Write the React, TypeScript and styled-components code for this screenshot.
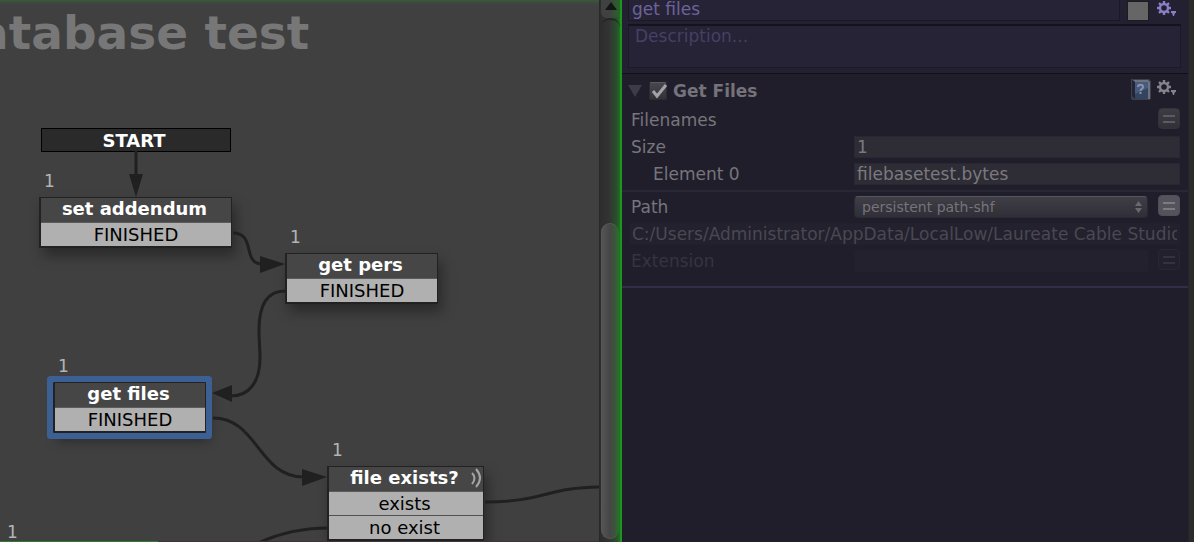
import React from 'react';
import styled, { createGlobalStyle } from 'styled-components';

const GlobalStyle = createGlobalStyle`
  * { box-sizing: border-box; }
  body { margin: 0; background: #201e2a; font-family: "DejaVu Sans", Verdana, sans-serif; overflow: hidden; }
  button, input, textarea, select { font-family: inherit; }
`;

const Editor = styled.div`
  display: grid;
  grid-template-columns: minmax(0, 599fr) 23px minmax(0, 566fr) 6px;
  height: 100vh;
`;

/* ---------- graph canvas ---------- */

const Canvas = styled.main`
  position: relative;
  overflow: hidden;
  background: linear-gradient(#3b5a3b 0, #3f463f 3px, #404040 6px, #404040 100%);
`;

const Title = styled.h1`
  position: absolute;
  left: -62px;
  top: 5px;
  margin: 0;
  font-size: 47px;
  line-height: 56px;
  white-space: nowrap;
  color: #777;
`;

const Wires = styled.svg`
  position: absolute;
  left: 0;
  top: 0;
  overflow: visible;
`;

const BottomRule = styled.div`
  position: absolute;
  left: 0;
  right: 0;
  bottom: 0;
  height: 1px;
  background: linear-gradient(90deg, #2f7a2f 158px, #40333d 158px);
`;

const Placed = styled.div<{ $x: number; $y: number; $w?: number }>`
  position: absolute;
  left: ${p => p.$x}px;
  top: ${p => p.$y}px;
  width: ${p => (p.$w ? `${p.$w}px` : 'auto')};
`;

const Count = styled.span`
  display: block;
  font-size: 17px;
  line-height: 20px;
  color: #b4b4b4;
`;

const StartBox = styled.div`
  height: 24px;
  padding-right: 4px;
  border: 1px solid #000;
  background: #2a2a2a;
  color: #fff;
  font-size: 18px;
  font-weight: bold;
  line-height: 23px;
  text-align: center;
`;

const StateBox = styled.section<{ $selected?: boolean }>`
  border: 1px solid #222;
  border-left-width: 2px;
  border-bottom-width: 2px;
  border-radius: ${p => (p.$selected ? '1px' : '0')};
  background: #464646;
  box-shadow: ${p => (p.$selected ? '0 0 0 6px #3c6094, ' : '')}4px 8px 12px rgba(0, 0, 0, 0.35);
`;

const StateName = styled.h2`
  position: relative;
  margin: 0;
  padding-right: 3px;
  font-size: 18px;
  line-height: 22px;
  height: 25px;
  color: #fff;
  text-align: center;
  border-bottom: 1px solid #5c5c5c;
`;

const StateEvent = styled.div<{ $shift?: boolean }>`
  height: 23px;
  padding-right: ${p => (p.$shift ? '3px' : '0')};
  background: #b0b0b0;
  color: #000;
  font-size: 18px;
  line-height: 23px;
  text-align: center;
  & + & { border-top: 1px solid #505050; height: 24px; }
`;

const Signal = styled.svg`
  position: absolute;
  right: 0;
  top: 1px;
`;

/* ---------- scroll bar ---------- */

const ScrollBar = styled.div`
  display: grid;
  grid-template-rows: 18px minmax(0, 205fr) minmax(0, 316fr) 3px;
  padding-left: 1px;
  border-left: 1px solid #292929;
  border-right: 2px solid #1c961c;
  background: linear-gradient(90deg, #2d2d2d, #333 45%, #29512b 85%, #217023);
`;

const ScrollButton = styled.button`
  display: flex;
  justify-content: center;
  align-items: flex-start;
  padding: 2px 0 0;
  border: 0;
  border-radius: 0 0 6px 6px;
  background: linear-gradient(90deg, #404040, #3f4340 50%, #28622a 90%);
`;

const TrackTop = styled.div`
  border-top: 2px solid #242624;
  border-radius: 9px 9px 0 0;
`;

const Thumb = styled.div`
  margin-right: 1px;
  border: 1px solid #555a55;
  border-right-color: #2b702c;
  border-radius: 9px;
  background: linear-gradient(90deg, #545454, #464646 50%, #3b553c 80%, #2a6c2b);
`;

/* ---------- inspector ---------- */

const Inspector = styled.aside`
  min-width: 0;
  background: #201e2a;
  color: #77757d;
  font-size: 17px;
`;

const StateHeader = styled.header`
  display: flex;
  flex-direction: column;
  gap: 3px;
  height: 74px;
  padding: 0 7px 0 6px;
  background: #222031;
  border-bottom: 1px solid #111019;
`;

const NameRow = styled.div`
  display: flex;
  align-items: flex-start;
  padding-right: 2px;
`;

const NameInput = styled.input`
  flex: 1;
  min-width: 0;
  height: 21px;
  padding: 0 3px 2px;
  border: 1px solid #1b1926;
  border-top: 0;
  background: #262337;
  color: #6c6399;
  font-size: 17px;
`;

const Swatch = styled.button`
  width: 22px;
  height: 20px;
  margin: 1px 8px 0 7px;
  border: 1px solid #1c1c1c;
  background: #666;
`;

const IconButton = styled.button`
  display: flex;
  padding: 0;
  border: 0;
  background: none;
`;

const Description = styled.textarea`
  display: block;
  width: 100%;
  height: 44px;
  padding: 0 6px;
  border: 1px solid #1c1a28;
  border-top: 2px solid #14121d;
  background: #262337;
  color: #6c6399;
  font-size: 17px;
  line-height: 20px;
  resize: none;
  &::placeholder { color: #454064; opacity: 1; }
`;

const ActionHeader = styled.div`
  display: flex;
  align-items: center;
  height: 34px;
  padding: 0 9px 0 6px;
`;

const Fold = styled.button`
  width: 14px;
  height: 12px;
  padding: 0;
  border: 0;
  background: #3d3b45;
  clip-path: polygon(0 0, 100% 0, 50% 100%);
`;

const CheckLabel = styled.label`
  position: relative;
  display: flex;
  align-items: center;
  gap: 6px;
  flex: 1;
  margin-left: 7px;
  color: #74727a;
  font-weight: bold;
`;

const Check = styled.input`
  appearance: none;
  width: 18px;
  height: 18px;
  margin: 0;
  border: 1px solid #2c2b32;
  border-top-color: #5a5960;
  border-radius: 2px;
  background: linear-gradient(#48474e, #323138);
`;

const Tick = styled.svg`
  position: absolute;
  left: 0;
  top: 1px;
  pointer-events: none;
`;

const Tools = styled.div`
  display: flex;
  gap: 6px;
  padding-bottom: 4px;
`;

const Fields = styled.div`
  display: flex;
  flex-direction: column;
  gap: 5px;
  padding: 1px 8px 5px 9px;
  border-bottom: 2px solid #292733;
  & + & {
    padding-top: 4px;
    padding-bottom: 14px;
    border-bottom-color: #312e48;
  }
`;

const Row = styled.div<{ $dim?: boolean }>`
  display: grid;
  grid-template-columns: minmax(0, 223fr) minmax(0, 326fr);
  align-items: center;
  height: 22px;
  color: ${p => (p.$dim ? '#36343f' : '#77757d')};
`;

const FieldLabel = styled.label<{ $indent?: boolean }>`
  padding-left: ${p => (p.$indent ? '22px' : '0')};
  line-height: 22px;
`;

const Slot = styled.div`
  display: flex;
  align-items: flex-start;
  justify-content: flex-end;
  gap: 10px;
  height: 22px;
`;

const TextInput = styled.input<{ $faint?: boolean }>`
  flex: 1;
  width: 100%;
  min-width: 0;
  height: 22px;
  padding: 0 2px;
  border: 1px solid ${p => (p.$faint ? '#22202c' : '#292731')};
  background: ${p => (p.$faint ? '#23212d' : '#2e2c34')};
  color: ${p => (p.$faint ? '#4a4852' : '#7b7980')};
  font-size: 17px;
`;

const PathPreview = styled.div`
  display: flex;
  margin-left: -2px;
`;

const SelectWrap = styled.div`
  position: relative;
  flex: 1;
  min-width: 0;
`;

const Select = styled.select`
  appearance: none;
  display: block;
  width: 100%;
  height: 22px;
  padding: 0 7px 1px;
  border: 1px solid #2b2933;
  border-top-color: #56545c;
  border-radius: 4px;
  background: linear-gradient(#3f3d45, #302e37);
  color: #75737b;
  font-size: 14px;
`;

const Arrows = styled.svg`
  position: absolute;
  right: 6px;
  top: 5px;
  pointer-events: none;
`;

const VarButton = styled.button<{ $tone: 'dim' | 'mid' | 'lit' }>`
  display: flex;
  align-items: center;
  justify-content: center;
  width: 22px;
  height: 21px;
  margin-top: -1px;
  padding: 0;
  border: 1px solid ${p => ({ dim: '#292733', mid: '#34323a', lit: '#504f57' })[p.$tone]};
  border-radius: 4px;
  background: ${p => ({ dim: '#22202c', mid: 'linear-gradient(#3e3c43, #323038)', lit: '#54535b' })[p.$tone]};
  color: ${p => ({ dim: '#34323e', mid: '#5c5a62', lit: '#7c7b83' })[p.$tone]};
`;

const Edge = styled.div`
  background: #2b2b2b;
  border-left: 1px solid #25242a;
`;

function Gear({ color }: { color: string }) {
  return (
    <svg width="22" height="18" viewBox="0 0 22 18" fill="none" aria-hidden="true">
      <circle cx="7" cy="8" r="4" stroke={color} strokeWidth="2.400" />
      <path
        d="M7 1v3M7 12v3M0 8h3M11 8h3M2 3l2 2M10 11l2 2M2 13l2-2M10 5l2-2"
        stroke={color}
        strokeWidth="2.400"
      />
      <path d="M14 11h5v2h-1l-1 3h-1l-1-3h-1z" fill={color} />
    </svg>
  );
}

function HelpBook() {
  return (
    <svg width="20" height="21" viewBox="0 0 20 21" aria-hidden="true">
      <path d="M0 0h18l2 2v18l-2 1H1l-1-2z" fill="#3c3f4c" />
      <path d="M2 1h15l2 2v17h-2V4H4z" fill="#6e717f" />
      <path d="M1 1l3 2h13v17H4l-3-3z" fill="#34435f" />
      <path d="M1 1l3 2v17l-3-3z" fill="#222735" />
      <path d="M4 3h13v6L4 15z" fill="#465a80" />
      <path d="M7 8c0-3 5-3 5 0 0 2-2.500 2-2.500 4M9.500 13v2" fill="none" stroke="#8a93a6" strokeWidth="2" />
    </svg>
  );
}

function Variable({ tone, label }: { tone: 'dim' | 'mid' | 'lit'; label: string }) {
  return (
    <VarButton $tone={tone} aria-label={label}>
      <svg width="12" height="8" viewBox="0 0 12 8" aria-hidden="true">
        <path d="M0 1h12M0 7h12" stroke="currentColor" strokeWidth="2" />
      </svg>
    </VarButton>
  );
}

type GraphState = { name: string; x: number; y: number; w: number; events: string[]; selected?: boolean; signal?: boolean };

const states: GraphState[] = [
  { name: 'set addendum', x: 39, y: 197, w: 193, events: ['FINISHED'] },
  { name: 'get pers', x: 285, y: 253, w: 153, events: ['FINISHED'] },
  { name: 'get files', x: 53, y: 382, w: 153, events: ['FINISHED'], selected: true },
  { name: 'file exists?', x: 327, y: 466, w: 157, events: ['exists', 'no exist'], signal: true },
];

const counts = [
  { x: 44, y: 171 },
  { x: 290, y: 227 },
  { x: 58, y: 356 },
  { x: 332, y: 440 },
  { x: 7, y: 522 },
];

export default function App() {
  return (
    <>
      <GlobalStyle />
      <Editor>
        <Canvas>
          <Title>Database test</Title>
          {states.map(s => (
            <Placed key={s.name} $x={s.x} $y={s.y} $w={s.w}>
              <StateBox $selected={s.selected}>
                <StateName>
                  {s.name}
                  {s.signal && (
                    <Signal width="12" height="20" viewBox="0 0 12 20" fill="none" stroke="#a4a4a4" strokeWidth="2" aria-hidden="true">
                      <path d="M1 5q5 5 0 11" />
                      <path d="M5 1q8 9 0 18" />
                    </Signal>
                  )}
                </StateName>
                {s.events.map(e => (
                  <StateEvent key={e} $shift={s.signal}>{e}</StateEvent>
                ))}
              </StateBox>
            </Placed>
          ))}
          <Placed $x={41} $y={128} $w={190}>
            <StartBox>START</StartBox>
          </Placed>
          {counts.map(c => (
            <Placed key={`${c.x}-${c.y}`} $x={c.x} $y={c.y}>
              <Count>1</Count>
            </Placed>
          ))}
          <Wires width="600" height="542" fill="none" stroke="#202020" strokeWidth="3" aria-hidden="true">
            <path d="M136 151V176" />
            <path d="M233 233C256 233 242 264 262 264" />
            <path d="M285 291C267 291 259 305 259 330C259 342 260 348 260 358C260 382 249 396 231 396" />
            <path d="M213 418C258 418 258 477 304 477" />
            <path d="M485 502C545 502 545 487 604 487" />
            <path d="M327 528C300 528 278 534 258 543" />
            <g fill="#202020" stroke="none">
              <path d="M129 174H143L136 197Z" />
              <path d="M260 256V273L285 264Z" />
              <path d="M232 385V402L212 393Z" />
              <path d="M302 469V486L327 477Z" />
            </g>
          </Wires>
          <BottomRule />
        </Canvas>

        <ScrollBar>
          <ScrollButton aria-label="Scroll up">
            <svg width="12" height="8" viewBox="0 0 12 8" aria-hidden="true">
              <path d="M6 0L12 8H0Z" fill="#141614" />
            </svg>
          </ScrollButton>
          <TrackTop />
          <Thumb />
        </ScrollBar>

        <Inspector>
          <StateHeader>
            <NameRow>
              <NameInput aria-label="State name" defaultValue="get files" />
              <Swatch aria-label="State color" />
              <IconButton aria-label="State settings"><Gear color="#8b7fc4" /></IconButton>
            </NameRow>
            <Description aria-label="Description" placeholder="Description..." />
          </StateHeader>

          <ActionHeader>
            <Fold aria-label="Collapse" />
            <CheckLabel>
              <Check type="checkbox" defaultChecked />
              <Tick width="20" height="18" viewBox="0 0 20 18" fill="none" aria-hidden="true">
                <path d="M4 9L8 14L17 3" stroke="#a3a2a9" strokeWidth="3" />
              </Tick>
              Get Files
            </CheckLabel>
            <Tools>
              <IconButton aria-label="Help"><HelpBook /></IconButton>
              <IconButton aria-label="Action settings"><Gear color="#85848c" /></IconButton>
            </Tools>
          </ActionHeader>

          <Fields>
            <Row>
              <FieldLabel as="span">Filenames</FieldLabel>
              <Slot><Variable tone="mid" label="Use variable for filenames" /></Slot>
            </Row>
            <Row>
              <FieldLabel htmlFor="size">Size</FieldLabel>
              <TextInput id="size" defaultValue="1" />
            </Row>
            <Row>
              <FieldLabel htmlFor="element" $indent>Element 0</FieldLabel>
              <TextInput id="element" defaultValue="filebasetest.bytes" />
            </Row>
          </Fields>

          <Fields>
            <Row>
              <FieldLabel htmlFor="path">Path</FieldLabel>
              <Slot>
                <SelectWrap>
                  <Select id="path"><option>persistent path-shf</option></Select>
                  <Arrows width="7" height="12" viewBox="0 0 7 12" fill="#696770" aria-hidden="true">
                    <path d="M3.500 0L7 5H0ZM0 7H7L3.500 12Z" />
                  </Arrows>
                </SelectWrap>
                <Variable tone="lit" label="Use variable for path" />
              </Slot>
            </Row>
            <PathPreview>
              <TextInput $faint readOnly aria-label="Resolved path" defaultValue="C:/Users/Administrator/AppData/LocalLow/Laureate Cable Studios" />
            </PathPreview>
            <Row $dim>
              <FieldLabel htmlFor="extension">Extension</FieldLabel>
              <Slot>
                <TextInput id="extension" $faint />
                <Variable tone="dim" label="Use variable for extension" />
              </Slot>
            </Row>
          </Fields>
        </Inspector>
        <Edge />
      </Editor>
    </>
  );
}
